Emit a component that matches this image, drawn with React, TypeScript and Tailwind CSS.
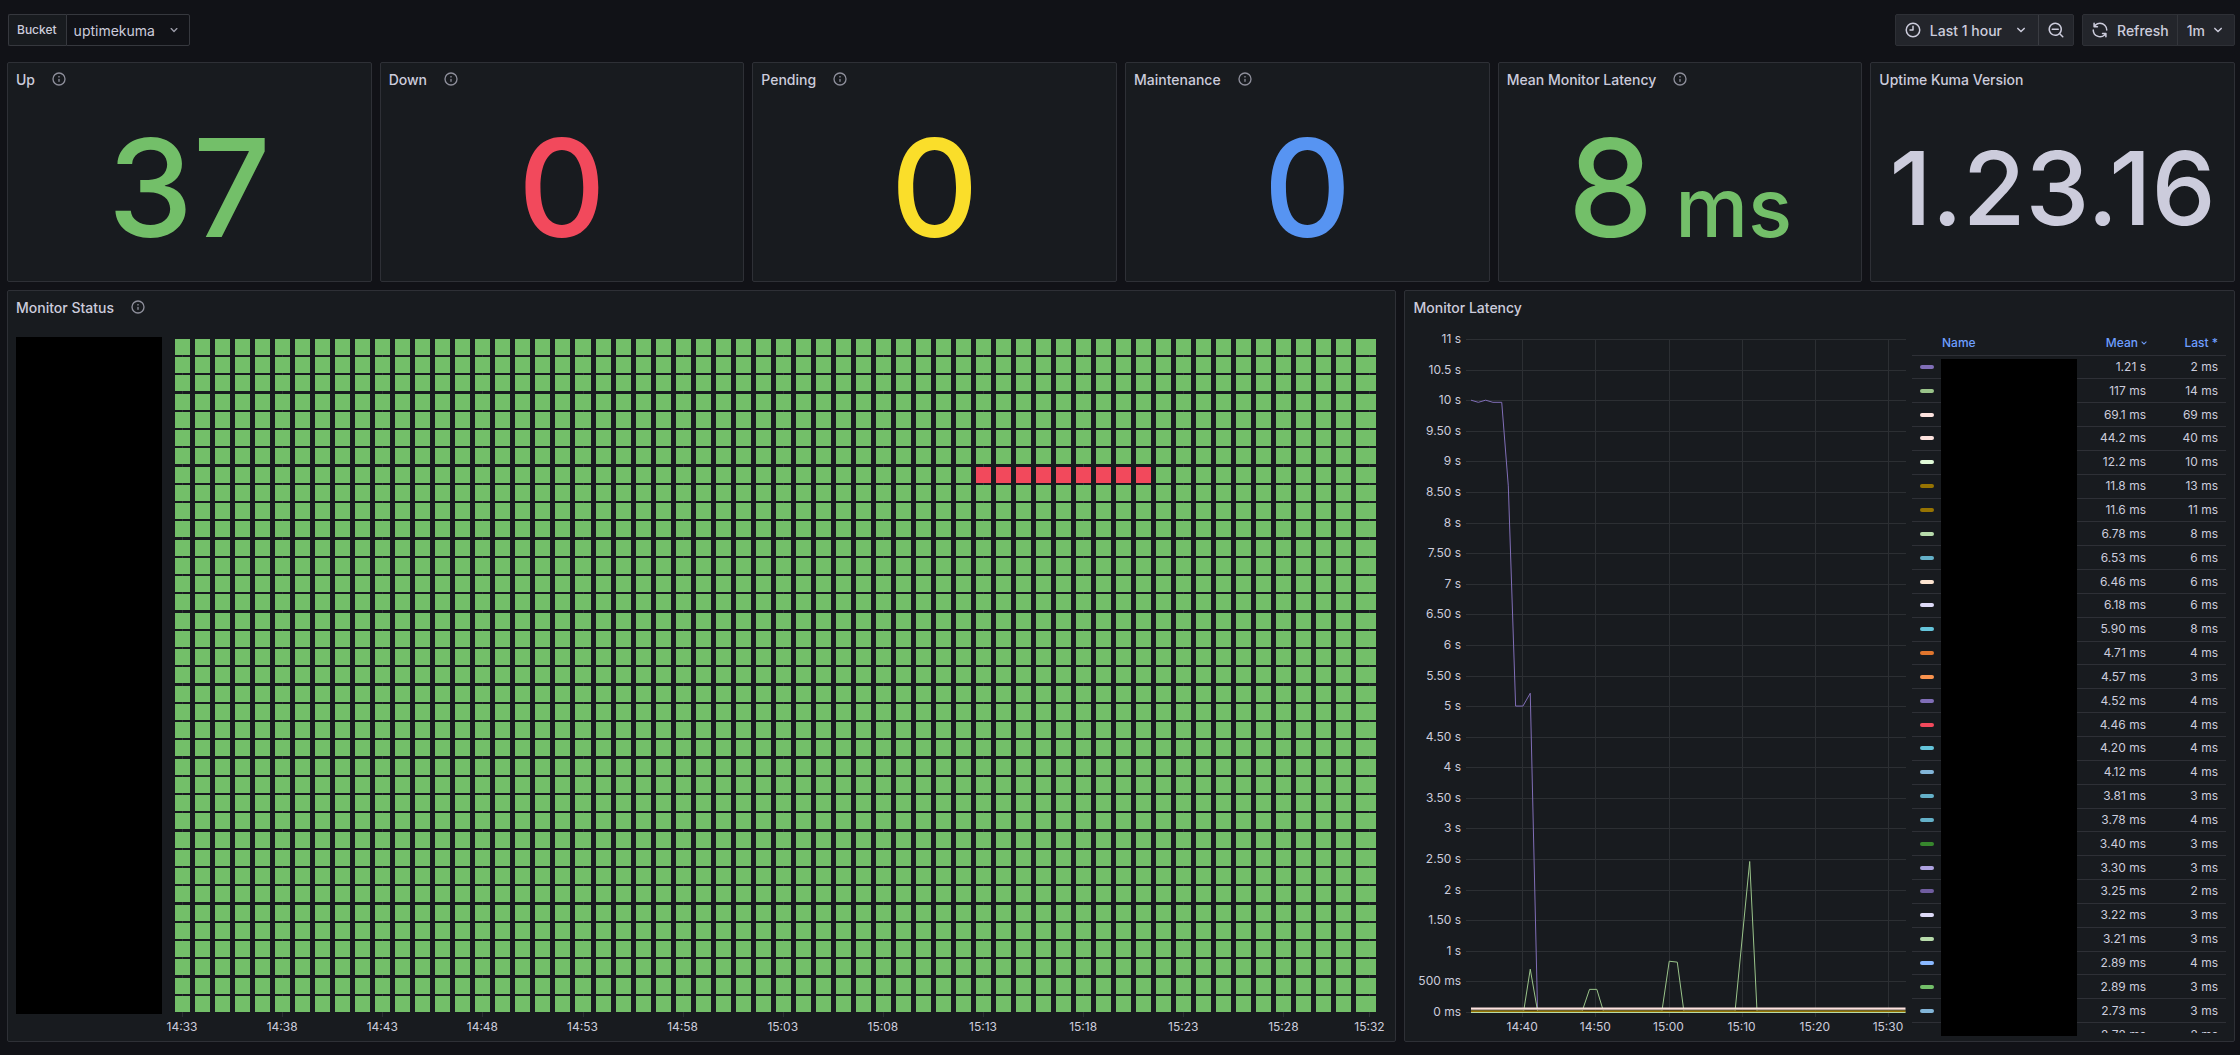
import clsx from 'clsx'

const icons = {
  info: 'M12,2A10,10,0,1,0,22,12,10,10,0,0,0,12,2Zm0,18a8,8,0,1,1,8-8A8,8,0,0,1,12,20Zm0-8.5a1,1,0,0,0-1,1v3a1,1,0,0,0,2,0v-3A1,1,0,0,0,12,11.5Zm0-4a1.25,1.25,0,1,0,1.25,1.25A1.25,1.25,0,0,0,12,7.5Z',
  angleDown:
    'M17,9.17a1,1,0,0,0-1.41,0L12,12.71,8.46,9.17a1,1,0,0,0-1.41,0,1,1,0,0,0,0,1.42l4.24,4.24a1,1,0,0,0,1.42,0L17,10.59A1,1,0,0,0,17,9.17Z',
  clock:
    'M12,2A10,10,0,1,0,22,12,10,10,0,0,0,12,2Zm0,18a8,8,0,1,1,8-8A8,8,0,0,1,12,20ZM12,6a1,1,0,0,0-1,1v4H8a1,1,0,0,0,0,2h4a1,1,0,0,0,1-1V7A1,1,0,0,0,12,6Z',
  zoomOut:
    'M21.71,20.29,18,16.61A9,9,0,1,0,16.61,18l3.68,3.68a1,1,0,0,0,1.42,0A1,1,0,0,0,21.71,20.29ZM11,18a7,7,0,1,1,7-7A7,7,0,0,1,11,18Zm4-8H7a1,1,0,0,0,0,2h8a1,1,0,0,0,0-2Z',
  sync: 'M19.91,15.51H15.38a1,1,0,0,0,0,2h2.4A8,8,0,0,1,4,12a1,1,0,0,0-2,0,10,10,0,0,0,16.88,7.23V21a1,1,0,0,0,2,0V16.5A1,1,0,0,0,19.91,15.51ZM12,2A10,10,0,0,0,5.12,4.77V3a1,1,0,0,0-2,0V7.5a1,1,0,0,0,1,1h4.5a1,1,0,0,0,0-2H6.22A8,8,0,0,1,20,12a1,1,0,0,0,2,0A10,10,0,0,0,12,2Z',
}

function Icon({ name, className }: { name: keyof typeof icons; className?: string }) {
  return (
    <svg viewBox="0 0 24 24" fill="currentColor" aria-hidden="true" className={clsx('shrink-0', className)}>
      <path d={icons[name]} />
    </svg>
  )
}

const stats = [
  { title: 'Up', value: '37', info: true, color: 'text-[#73bf69]', size: 'text-[136px]' },
  { title: 'Down', value: '0', info: true, color: 'text-[#f2495c]', size: 'text-[136px]' },
  { title: 'Pending', value: '0', info: true, color: 'text-[#fade2a]', size: 'text-[136px]' },
  { title: 'Maintenance', value: '0', info: true, color: 'text-[#5794f2]', size: 'text-[136px]' },
  { title: 'Mean Monitor Latency', value: '8', unit: 'ms', info: true, color: 'text-[#73bf69]', size: 'text-[136px]' },
  { title: 'Uptime Kuma Version', value: '1.23.16', info: false, color: 'text-[#ccccdc]', size: 'text-[102px]' },
]

// color, mean, last
const series = [
  ['#806eb7', '1.21 s', '2 ms'],
  ['#9ac48a', '117 ms', '14 ms'],
  ['#fce2de', '69.1 ms', '69 ms'],
  ['#fce2de', '44.2 ms', '40 ms'],
  ['#e0f9d7', '12.2 ms', '10 ms'],
  ['#967302', '11.8 ms', '13 ms'],
  ['#967302', '11.6 ms', '11 ms'],
  ['#b7dbab', '6.78 ms', '8 ms'],
  ['#64b0c8', '6.53 ms', '6 ms'],
  ['#fce4d0', '6.46 ms', '6 ms'],
  ['#dedaf7', '6.18 ms', '6 ms'],
  ['#65c5db', '5.90 ms', '8 ms'],
  ['#e0752d', '4.71 ms', '4 ms'],
  ['#f9934e', '4.57 ms', '3 ms'],
  ['#806eb7', '4.52 ms', '4 ms'],
  ['#f2495c', '4.46 ms', '4 ms'],
  ['#65c5db', '4.20 ms', '4 ms'],
  ['#82b5d8', '4.12 ms', '4 ms'],
  ['#64b0c8', '3.81 ms', '3 ms'],
  ['#64b0c8', '3.78 ms', '4 ms'],
  ['#37872d', '3.40 ms', '3 ms'],
  ['#aea2e0', '3.30 ms', '3 ms'],
  ['#705da0', '3.25 ms', '2 ms'],
  ['#dedaf7', '3.22 ms', '3 ms'],
  ['#b7dbab', '3.21 ms', '3 ms'],
  ['#8ab8ff', '2.89 ms', '4 ms'],
  ['#73bf69', '2.89 ms', '3 ms'],
  ['#82b5d8', '2.73 ms', '3 ms'],
  ['#aea2e0', '2.72 ms', '2 ms'],
]

function Panel({
  title,
  info,
  className,
  children,
}: {
  title: string
  info?: boolean
  className?: string
  children: React.ReactNode
}) {
  return (
    <section className={clsx('flex min-w-0 flex-col rounded-xs border border-[#2e3036] bg-[#181b1f]', className)}>
      <header className="flex h-8 shrink-0 items-center gap-4 px-2">
        <h2 className="pt-0.5 text-sm font-medium">{title}</h2>
        {info && (
          <button type="button" aria-label={`${title} description`} className="text-[#8e8f9b]">
            <Icon name="info" className="size-4" />
          </button>
        )}
      </header>
      {children}
    </section>
  )
}

function Toolbar() {
  return (
    <div className="flex h-8 shrink-0 items-stretch justify-between text-sm font-medium">
      <div className="ml-px flex">
        <label
          htmlFor="bucket"
          className="flex items-center rounded-l-xs border border-r-0 border-[#36383e] bg-[#181b1f] pr-[9px] pl-2 text-xs"
        >
          Bucket
        </label>
        <div className="relative flex">
          <select
            id="bucket"
            className="w-[124px] appearance-none rounded-r-xs border border-[#36383e] bg-[#111217] pt-0.5 pl-[7px] text-sm font-normal"
          >
            <option>uptimekuma</option>
          </select>
          <Icon name="angleDown" className="pointer-events-none absolute top-2 right-2 size-4 text-[#9c9ca9]" />
        </div>
      </div>
      <div className="flex gap-2">
        <div className="flex rounded-xs border border-[#2e3036] bg-[#23252b]">
          <button type="button" className="flex items-center gap-2 border-r border-[#3a3c42] px-2">
            <Icon name="clock" className="size-[18px]" />
            <span className="pt-0.5">Last 1 hour</span>
            <Icon name="angleDown" className="ml-0.5 size-[18px]" />
          </button>
          <button type="button" aria-label="Zoom out time range" className="px-2">
            <Icon name="zoomOut" className="size-[18px]" />
          </button>
        </div>
        <div className="flex rounded-xs border border-[#2e3036] bg-[#23252b]">
          <button type="button" className="flex items-center gap-2 border-r border-[#33353b] px-2">
            <Icon name="sync" className="size-[18px]" />
            <span className="pt-0.5">Refresh</span>
          </button>
          <button type="button" aria-label="Auto refresh interval 1m" className="flex items-center gap-1 pr-[7px] pl-[9px]">
            <span className="pt-0.5">1m</span>
            <Icon name="angleDown" className="size-[18px]" />
          </button>
        </div>
      </div>
    </div>
  )
}

const ROWS = 37
const COLS = 60
const DOWN_ROW = 7

const statusTicks = [
  ['14:33', 0],
  ['14:38', 5],
  ['14:43', 10],
  ['14:48', 15],
  ['14:53', 20],
  ['14:58', 25],
  ['15:03', 30],
  ['15:08', 35],
  ['15:13', 40],
  ['15:18', 45],
  ['15:23', 50],
  ['15:28', 55],
  ['15:32', 59.3],
] as const

function StatusChart() {
  const cells = []
  for (let row = 0; row < ROWS; row++) {
    for (let col = 0; col < COLS; col++) {
      const down = row === DOWN_ROW && col >= 40 && col <= 48
      cells.push(
        <rect
          key={`${row}-${col}`}
          x={`${(col / COLS) * 100}%`}
          y={`${(row / ROWS) * 100}%`}
          width={`${((col === COLS - 1 ? 1 : 0.75) / COLS) * 100}%`}
          height={`${(0.877 / ROWS) * 100}%`}
          fill={down ? '#f2495c' : '#73bf69'}
        />,
      )
    }
  }
  return (
    <svg className="mt-2 mr-[11px] mb-[19px] ml-[13px] min-w-0 flex-1 overflow-visible" role="img" aria-label="Monitor status over time">
      {statusTicks.map(([label, col]) => {
        const x = `${((col + 0.35) / COLS) * 100}%`
        return (
          <g key={label}>
            <svg x={x} overflow="visible">
              <rect width="1" height="100%" fill="#2c2f33" shapeRendering="crispEdges" />
            </svg>
            <svg x={x} y="100%" overflow="visible">
              <rect width="1" height="3" fill="#2c2f33" shapeRendering="crispEdges" />
              <text y="17" textAnchor="middle" fill="#ccccdc" className="text-xs">
                {label}
              </text>
            </svg>
          </g>
        )
      })}
      <g shapeRendering="crispEdges">{cells}</g>
    </svg>
  )
}

const latencyLabels = [
  '11 s', '10.5 s', '10 s', '9.50 s', '9 s', '8.50 s', '8 s', '7.50 s', '7 s', '6.50 s', '6 s', '5.50 s',
  '5 s', '4.50 s', '4 s', '3.50 s', '3 s', '2.50 s', '2 s', '1.50 s', '1 s', '500 ms', '0 ms',
]
const timeLabels = ['14:40', '14:50', '15:00', '15:10', '15:20', '15:30']

// [minutes since 14:33, ms]
type Point = [number, number]
const SPAN = 59.4
const MAX = 11000

const slow: Point[] = [
  [0, 10000], [1, 9965], [2, 10000], [3, 9965], [4.2, 9965], [5.1, 8600], [6.1, 5000], [7.1, 5000], [8.1, 5210], [9.1, 0],
]
const spiky: Point[] = [
  [0, 14], [7.2, 14], [8.1, 700], [9.1, 14], [15.2, 14], [16.2, 370], [17.2, 370], [18.1, 14], [26.1, 14],
  [27.1, 830], [28.2, 815], [29.1, 14], [36.1, 14], [38.1, 2460], [39.1, 14], [SPAN, 14],
]

function Line({ points, color, width = 1 }: { points: Point[]; color: string; width?: number }) {
  return (
    <polyline
      points={points.map(([t, ms]) => `${t},${MAX - ms}`).join(' ')}
      fill="none"
      stroke={color}
      strokeWidth={width}
      vectorEffect="non-scaling-stroke"
    />
  )
}

const flat = (ms: number): Point[] => [[0, ms], [SPAN, ms]]

function LatencyChart() {
  return (
    <svg className="mt-2 mr-[6px] mb-[21px] ml-[58px] min-w-0 flex-1 overflow-visible" role="img" aria-label="Monitor latency over time">
      {latencyLabels.map((label, i) => (
        <svg key={label} y={`${(i / 22) * 100}%`} overflow="visible">
          <rect x="-5" width="5" height="1" fill="#2c2f33" shapeRendering="crispEdges" />
          <rect width="100%" height="1" fill="#2c2f33" shapeRendering="crispEdges" />
          <text x="-10" y="4" textAnchor="end" fill="#ccccdc" className="text-xs">
            {label}
          </text>
        </svg>
      ))}
      {timeLabels.map((label, i) => {
        const x = `${((7 + i * 10) / SPAN) * 100}%`
        return (
          <g key={label}>
            <svg x={x} overflow="visible">
              <rect width="1" height="100%" fill="#2c2f33" shapeRendering="crispEdges" />
            </svg>
            <svg x={x} y="100%" overflow="visible">
              <rect width="1" height="5" fill="#2c2f33" shapeRendering="crispEdges" />
              <text y="19" textAnchor="middle" fill="#ccccdc" className="text-xs">
                {label}
              </text>
            </svg>
          </g>
        )
      })}
      <svg viewBox={`0 0 ${SPAN} ${MAX}`} preserveAspectRatio="none" width="100%" height="100%" overflow="visible">
        <Line points={slow} color="#806eb7" />
        <Line points={spiky} color="#9ac48a" />
        <Line points={flat(40)} color="#7d716d" />
        <Line points={flat(8)} color="#967302" width={2} />
        <Line points={flat(-8)} color="#b7dbab" />
        <Line points={flat(57)} color="#fce2de" width={2} />
      </svg>
    </svg>
  )
}

function Legend() {
  return (
    <div className="relative w-[314px] shrink-0">
      <div className="h-full overflow-hidden">
        <table className="h-[716px] w-full table-fixed border-collapse text-xs">
          <thead>
            <tr className="h-6 border-b border-[#2e3036] text-[#6e9fff]">
              <th className="w-[30px] p-0" aria-label="Color" />
              <th className="p-0 text-left font-medium">
                <button type="button">Name</button>
              </th>
              <th className="w-[76px] p-0 pr-2 text-right font-medium">
                <button type="button" className="-mr-1 inline-flex items-center">
                  Mean
                  <Icon name="angleDown" className="size-3" />
                </button>
              </th>
              <th className="w-[72px] p-0 pr-2 text-right font-medium">
                <button type="button">Last *</button>
              </th>
            </tr>
          </thead>
          <tbody>
            {series.map(([color, mean, last], i) => (
              <tr key={i} className="border-b border-[#2e3036]">
                <td className="p-0 pl-2">
                  <div className="h-1 w-[14px] rounded-full" style={{ background: color }} />
                </td>
                <td className="p-0" />
                <td className="p-0 pr-2 text-right">{mean}</td>
                <td className="p-0 pr-2 text-right">{last}</td>
              </tr>
            ))}
          </tbody>
        </table>
      </div>
      <div className="absolute top-7 -bottom-[3px] left-[29px] w-[136px] bg-black" />
    </div>
  )
}

export default function App() {
  return (
    <div className="flex h-screen min-h-[900px] flex-col bg-[#111217] pt-[14px] pr-[5px] pb-[13px] pl-[7px] font-['Inter',sans-serif] text-[#ccccdc]">
      <Toolbar />
      <main className="mt-4 grid min-h-0 flex-1 grid-cols-24 grid-rows-[220px_minmax(0,1fr)] gap-2">
        {stats.map((s) => (
          <Panel key={s.title} title={s.title} info={s.info} className="col-span-4">
            <div className={clsx('flex flex-1 items-center justify-center leading-none font-medium', s.color, s.size)}>
              <p className="whitespace-pre">
                {s.value}
                {s.unit && <span className="text-[82px]"> {s.unit}</span>}
              </p>
            </div>
          </Panel>
        ))}
        <Panel title="Monitor Status" info className="col-span-15">
          <div className="flex min-h-0 flex-1 p-2">
            <div className="mt-[6px] mb-[19px] w-[146px] shrink-0 bg-black" />
            <StatusChart />
          </div>
        </Panel>
        <Panel title="Monitor Latency" className="col-span-9">
          <div className="flex min-h-0 flex-1 p-2">
            <LatencyChart />
            <Legend />
          </div>
        </Panel>
      </main>
    </div>
  )
}
